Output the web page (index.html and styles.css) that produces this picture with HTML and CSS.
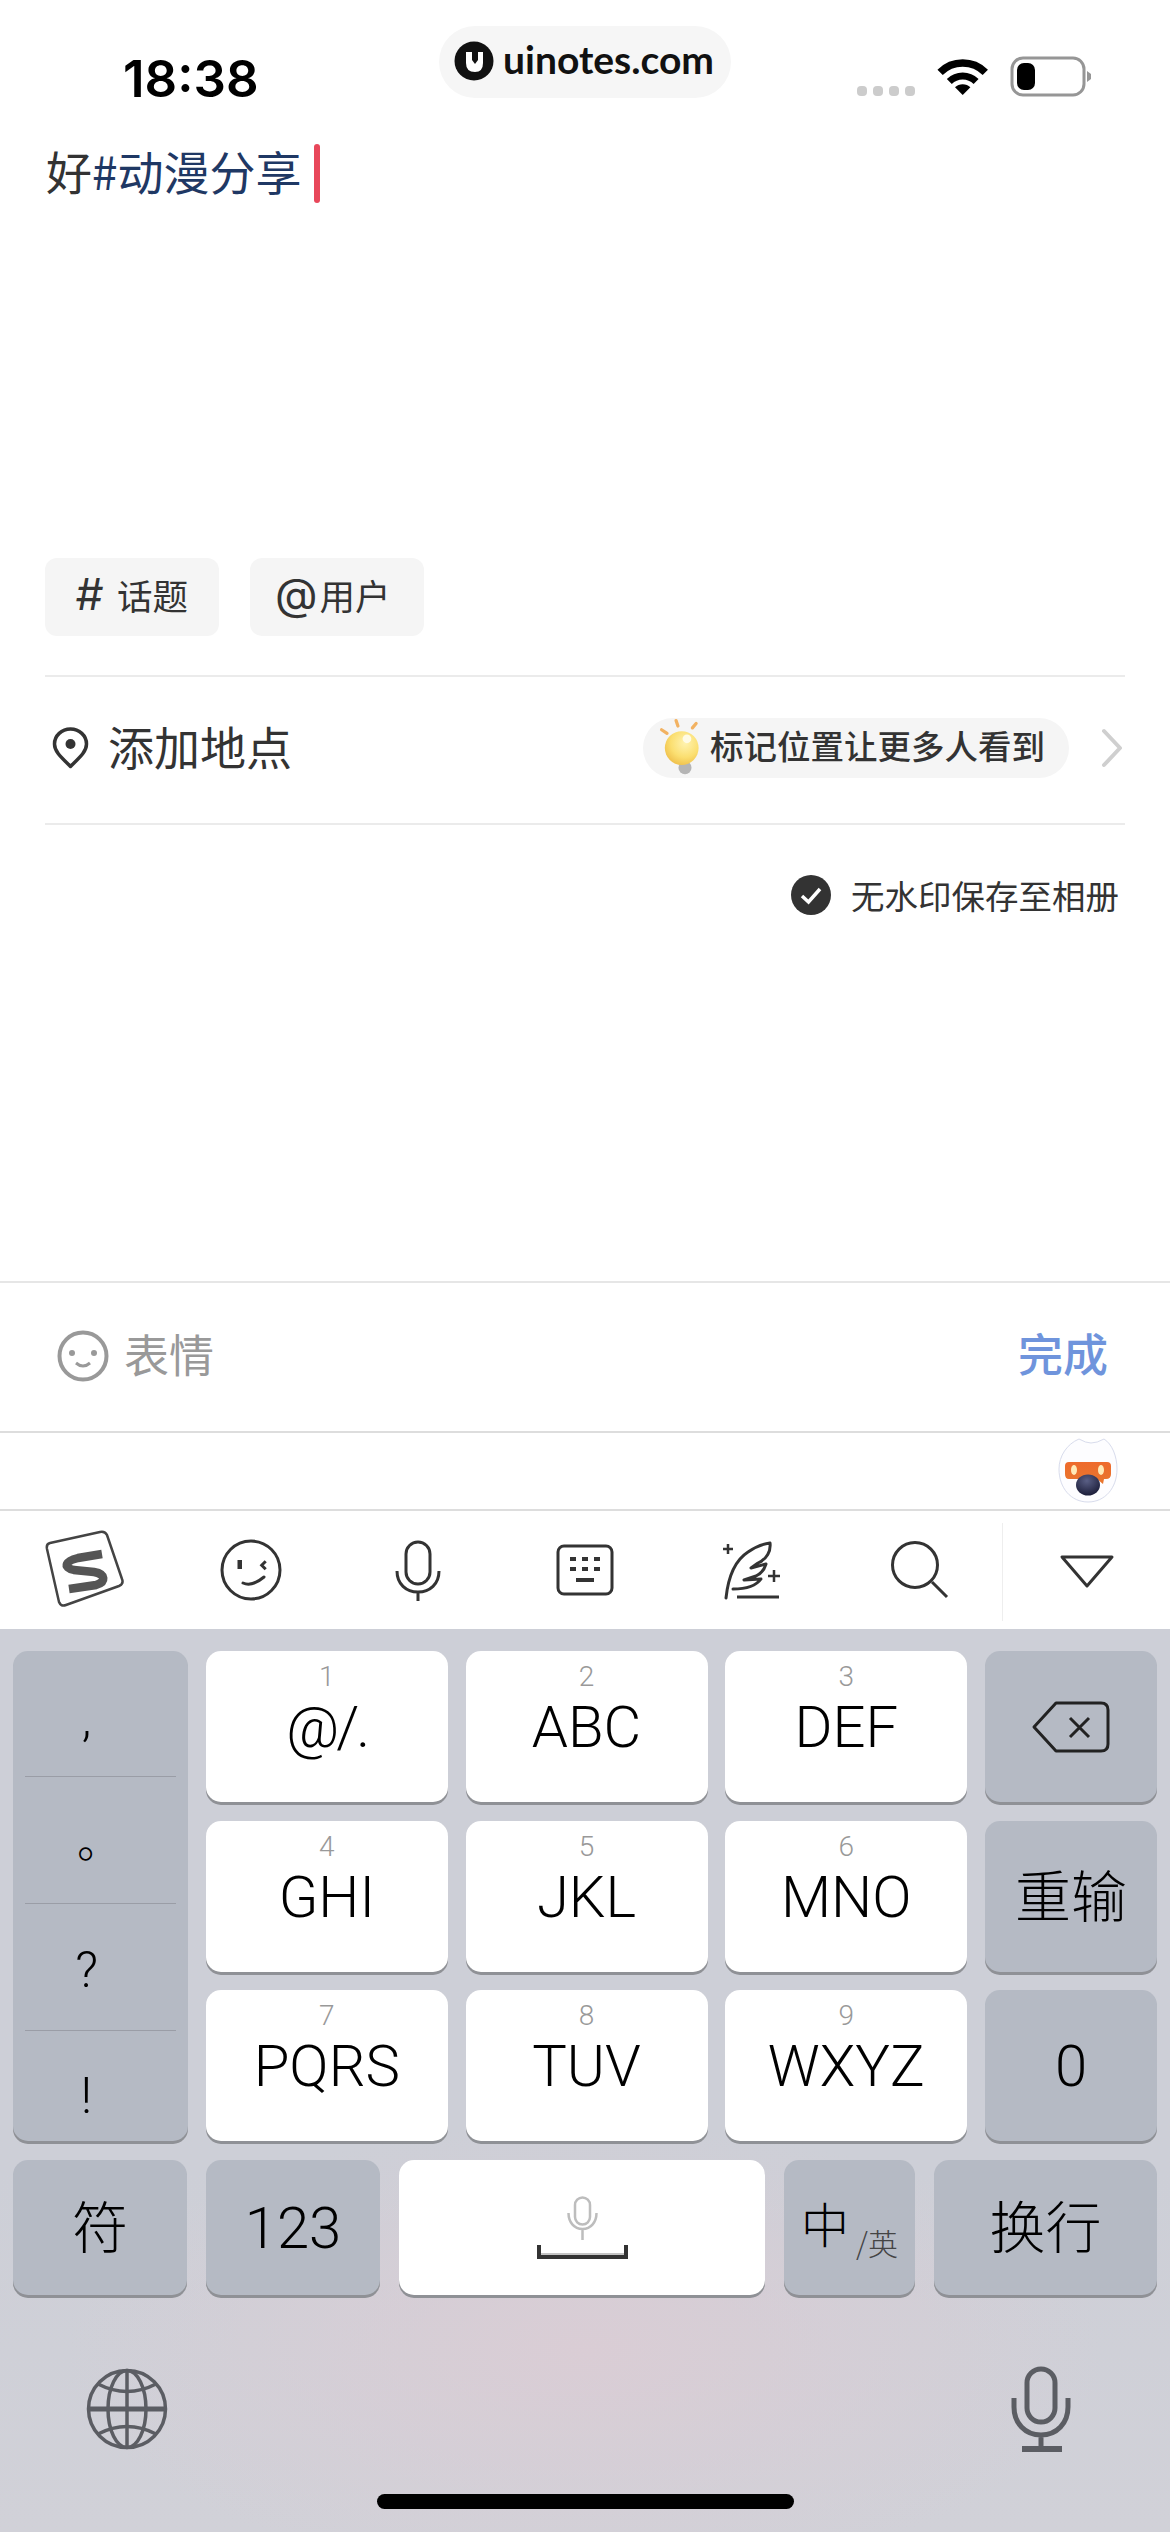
FILE: index.html
```html
<!DOCTYPE html>
<html lang="zh-CN">
<head>
    <meta charset="UTF-8">
    <meta name="viewport" content="width=device-width, initial-scale=1.0">
    <title>发布笔记</title>
    <link rel="stylesheet" href="styles.css">
</head>
<body>
<div class="page">
    <!-- Status bar -->
    <div class="status-bar">
        <span class="time">18:38</span>
        <div class="brand-pill">
            <svg class="brand-logo" width="40" height="40" viewBox="0 0 40 40">
                <circle cx="20" cy="20" r="19.5" fill="#111"/>
                <path d="M12 11H18V19L21 23L24 19V11H29V22Q29 31 21 31Q12 31 12 22Z" fill="#fff"/>
            </svg>
            <span>uinotes.com</span>
        </div>
        <div class="signal"><i></i><i></i><i></i><i></i></div>
        <svg class="wifi" width="54" height="40" viewBox="0 0 54 40">
            <path d="M4.1 15.4A32 32 0 0 1 49.3 15.4" fill="none" stroke="#000" stroke-width="7.5"/>
            <path d="M13.3 24.6A19 19 0 0 1 40.1 24.6" fill="none" stroke="#000" stroke-width="7"/>
            <path d="M26.7 38L19 30.3A11 11 0 0 1 34.4 30.3Z" fill="#000"/>
        </svg>
        <svg class="battery" width="84" height="42" viewBox="0 0 84 42">
            <rect x="2" y="2" width="72" height="37" rx="11" fill="none" stroke="#969696" stroke-width="3"/>
            <rect x="7" y="7" width="18" height="27" rx="7" fill="#000"/>
            <path d="M77 15L81 18V23L77 26Z" fill="#969696"/>
        </svg>
    </div>

    <!-- Note text -->
    <div class="editor">
        <span class="plain">好</span><span class="topic">#动漫分享</span><span class="caret"></span>
    </div>

    <div class="chips">
        <div class="chip"><span class="chip-hash">#</span><span class="chip-text">话题</span></div>
        <div class="chip chip-user"><span class="chip-at">@</span><span class="chip-text">用户</span></div>
    </div>

    <!-- Location row -->
    <div class="location">
        <svg class="pin" width="39" height="42" viewBox="0 0 39 42">
            <path d="M19.5 39.5C11 31 3.5 25 3.5 17A16 15 0 0 1 35.5 17C35.5 25 28 31 19.5 39.5Z" fill="none" stroke="#333" stroke-width="3.5" stroke-linejoin="round"/>
            <circle cx="19.5" cy="17" r="5" fill="#333"/>
        </svg>
        <span class="location-label">添加地点</span>
        <div class="hint">
            <svg width="46" height="61" viewBox="0 0 42 56">
                <defs>
                    <radialGradient id="bulbFill" cx="60%" cy="35%" r="70%">
                        <stop offset="0" stop-color="#fff3b0"/>
                        <stop offset="0.6" stop-color="#fbdf71"/>
                        <stop offset="1" stop-color="#efbf4a"/>
                    </radialGradient>
                </defs>
                <path d="M18.3 3.3L20 8.3M36.7 6L33.3 10M5 11.7L10 15" stroke="#f2b262" stroke-width="3" stroke-linecap="round"/>
                <circle cx="26.5" cy="46.5" r="6" fill="#b5b5b5"/>
                <circle cx="23.5" cy="28.5" r="15.5" fill="url(#bulbFill)"/>
                <circle cx="28.3" cy="20" r="4" fill="#fffbe6"/>
            </svg>
            <span>标记位置让更多人看到</span>
        </div>
        <svg class="chevron" width="24" height="40" viewBox="0 0 24 40">
            <path d="M4 3L20 20L4 37" fill="none" stroke="#cfcfcf" stroke-width="4" stroke-linecap="round" stroke-linejoin="round"/>
        </svg>
    </div>

    <div class="save-row">
        <svg width="40" height="40" viewBox="0 0 40 40">
            <circle cx="20" cy="20" r="20" fill="#333"/>
            <path d="M11 21L17.5 27L29 14" fill="none" stroke="#fff" stroke-width="3.5"/>
        </svg>
        <span>无水印保存至相册</span>
    </div>

    <!-- Emoji / done bar -->
    <div class="emoji-bar">
        <div class="emoji-left">
            <svg width="52" height="52" viewBox="0 0 52 52">
                <circle cx="26" cy="26" r="23.5" fill="none" stroke="#999" stroke-width="4"/>
                <circle cx="15" cy="23" r="3" fill="#999"/>
                <circle cx="37" cy="23" r="3" fill="#999"/>
                <path d="M19 33Q26 39 33 33" fill="none" stroke="#999" stroke-width="3"/>
            </svg>
            <span>表情</span>
        </div>
        <span class="done">完成</span>
    </div>

    <!-- Input method candidates strip -->
    <div class="assistant-bar">
        <svg width="62" height="70" viewBox="0 0 62 70">
            <defs>
                <linearGradient id="visor" x1="0" y1="0" x2="0" y2="1">
                    <stop offset="0" stop-color="#ee6a2c"/>
                    <stop offset="1" stop-color="#e8772e"/>
                </linearGradient>
                <radialGradient id="ball" cx="45%" cy="30%" r="70%">
                    <stop offset="0" stop-color="#5a5f85"/>
                    <stop offset="1" stop-color="#1c1e3a"/>
                </radialGradient>
            </defs>
            <path d="M22 3Q29 7 34 7Q40 7 47 3C55 8 60 20 60 33C60 52 48 66 31 66C14 66 2 52 2 33C2 20 10 8 22 3Z" fill="#fdfdff" stroke="#d8dcec" stroke-width="1"/>
            <path d="M12 26H50Q54 26 54 30V38Q54 43 49 43H47L46 48L40 43H12Q8 43 8 38V30Q8 26 12 26Z" fill="url(#visor)"/>
            <ellipse cx="17" cy="34" rx="3" ry="5" fill="#ffeab8"/>
            <ellipse cx="44" cy="34" rx="3" ry="5" fill="#ffeab8"/>
            <ellipse cx="31" cy="49" rx="12" ry="10.5" fill="url(#ball)"/>
        </svg>
    </div>

    <!-- Keyboard toolbar -->
    <div class="toolbar">
        <div class="tool">
            <svg width="80" height="80" viewBox="0 0 80 80">
                <path d="M6 13L56 2Q61 1 63 5L78 49Q80 54 75 56L22 75Q17 77 15 72L3 19Q2 14 6 13Z" fill="none" stroke="#444" stroke-width="2.5"/>
                <path d="M58 24L34 28C22 31 18 37 30 40L50 42C62 44 62 52 52 55L25 59" fill="none" stroke="#555" stroke-width="8.5"/>
            </svg>
        </div>
        <div class="tool">
            <svg width="62" height="62" viewBox="0 0 62 62">
                <circle cx="31" cy="31" r="29" fill="none" stroke="#333" stroke-width="3"/>
                <rect x="17.5" y="21" width="4.5" height="9" fill="#333"/>
                <path d="M45.7 22.3L41.7 26.3L45.7 30.3" fill="none" stroke="#333" stroke-width="3"/>
                <path d="M23 44Q32 48 44 38" fill="none" stroke="#333" stroke-width="3" stroke-linecap="round"/>
            </svg>
        </div>
        <div class="tool">
            <svg width="48" height="63" viewBox="0 0 48 63">
                <rect x="12" y="3" width="24" height="42" rx="12" fill="none" stroke="#333" stroke-width="3"/>
                <path d="M3 32C3 45 12 53 24 53C36 53 45 45 45 32M24 53V62" fill="none" stroke="#333" stroke-width="3"/>
            </svg>
        </div>
        <div class="tool">
            <svg width="59" height="54" viewBox="0 0 59 54">
                <rect x="3" y="3" width="54" height="48" rx="6" fill="none" stroke="#333" stroke-width="3"/>
                <path d="M15 14h6v4h-6zM27 14h6v4h-6zM39 14h6v4h-6zM15 24h6v4h-6zM27 24h6v4h-6zM39 24h6v4h-6zM21 35h18v4H21z" fill="#333"/>
            </svg>
        </div>
        <div class="tool">
            <svg width="64" height="62" viewBox="0 0 64 62">
                <path d="M6 59C8 40 14 22 28 13C35 8 42 5 50 4C51 12 47 20 38 24L31 29L46 25C44 32 40 35 36 37L24 41L41 40C36 47 28 50 13 50" fill="none" stroke="#333" stroke-width="3" stroke-linecap="round" stroke-linejoin="round"/>
                <path d="M8 5V15M3 10H13M54 31V43M48 37H60" stroke="#333" stroke-width="2.5"/>
                <path d="M17 58H59" stroke="#333" stroke-width="3"/>
            </svg>
        </div>
        <div class="tool">
            <svg width="60" height="58" viewBox="0 0 60 58">
                <circle cx="26" cy="24" r="22.5" fill="none" stroke="#333" stroke-width="3"/>
                <path d="M43 41L58 56" stroke="#333" stroke-width="3"/>
            </svg>
        </div>
        <div class="tool tool-last">
            <svg width="56" height="36" viewBox="0 0 56 36">
                <path d="M3 3H53L28 32Z" fill="none" stroke="#333" stroke-width="3" stroke-linejoin="round"/>
            </svg>
        </div>
    </div>

    <!-- Keyboard -->
    <div class="keyboard">
        <div class="keypad">
            <div class="key key-gray punct">
                <div class="punct-cell"><span class="p-comma">,</span></div>
                <div class="punct-cell"><span class="p-stop">。</span></div>
                <div class="punct-cell"><span class="p-ask">?</span></div>
                <div class="punct-cell"><span class="p-bang">!</span></div>
            </div>
            <div class="key key-num"><small>1</small><b class="tight">@/.</b></div>
            <div class="key key-num"><small>2</small><b>ABC</b></div>
            <div class="key key-num"><small>3</small><b>DEF</b></div>
            <div class="key key-gray">
                <svg width="80" height="54" viewBox="0 0 80 54">
                    <path d="M25 3H70Q77 3 77 10V44Q77 51 70 51H25L3 27Z" fill="none" stroke="#222" stroke-width="3" stroke-linejoin="round"/>
                    <path d="M39 18L58 37M58 18L39 37" stroke="#222" stroke-width="3"/>
                </svg>
            </div>
            <div class="key key-num"><small>4</small><b>GHI</b></div>
            <div class="key key-num"><small>5</small><b>JKL</b></div>
            <div class="key key-num"><small>6</small><b>MNO</b></div>
            <div class="key key-gray key-text"><span>重输</span></div>
            <div class="key key-num"><small>7</small><b>PQRS</b></div>
            <div class="key key-num"><small>8</small><b>TUV</b></div>
            <div class="key key-num"><small>9</small><b>WXYZ</b></div>
            <div class="key key-gray key-latin">0</div>
        </div>
        <div class="key-row">
            <div class="key key-gray key-text w-sym"><span>符</span></div>
            <div class="key key-gray key-latin w-sym">123</div>
            <div class="key key-space">
                <svg width="31" height="44" viewBox="0 0 31 44">
                    <rect x="8" y="1.5" width="15" height="27" rx="7.5" fill="none" stroke="#bdbdbd" stroke-width="2.5"/>
                    <path d="M1.5 17C1.5 26 7 33 15.5 33C24 33 29.5 26 29.5 17M15.5 33V44" fill="none" stroke="#bdbdbd" stroke-width="2.5"/>
                </svg>
                <svg width="91" height="14" viewBox="0 0 91 14">
                    <path d="M2 0V12H89V0" fill="none" stroke="#333" stroke-width="4"/>
                    <path d="M4 9H87" stroke="#c4c4c4" stroke-width="2"/>
                </svg>
            </div>
            <div class="key key-gray w-lang">
                <span class="lang-main">中</span><span class="lang-sub">/英</span>
            </div>
            <div class="key key-gray key-text w-return"><span>换行</span></div>
        </div>
        <div class="system-row">
            <svg width="84" height="84" viewBox="0 0 84 84">
                <g fill="none" stroke="#5b5d63" stroke-width="3.5">
                    <circle cx="42" cy="42" r="38.5"/>
                    <ellipse cx="42" cy="42" rx="19" ry="38.5"/>
                    <path d="M42 3.5V80.5"/>
                    <path d="M3.5 42H80.5" stroke-width="5"/>
                    <path d="M13 17Q42 32 71 17M13 67Q42 52 71 67"/>
                </g>
            </svg>
            <svg width="60" height="88" viewBox="0 0 60 88">
                <g fill="none" stroke="#5b5d63" stroke-width="5">
                    <rect x="16" y="4" width="28" height="53" rx="14"/>
                    <path d="M3 33V42C3 58 14 70 30 70C46 70 57 58 57 42V33M30 70V84"/>
                    <path d="M11 84H51" stroke-width="6"/>
                </g>
            </svg>
        </div>
        <div class="home-bar"></div>
    </div>
</div>
</body>
</html>
```
FILE: styles.css
```css
/* Reset and page frame */
* {
    box-sizing: border-box;
}

body {
    margin: 0;
    background-color: #fff;
    font-family: "Noto Sans CJK SC", "Noto Sans", sans-serif;
    color: #333;
}

.page {
    width: 1170px;
    height: 2532px;
    display: flex;
    flex-direction: column;
    overflow: hidden;
}

/* Status bar */
.status-bar {
    height: 130px;
    display: flex;
    align-items: flex-start;
    padding-left: 123px;
}

.time {
    width: 316px;
    margin-top: 50px;
    font-family: Inter, sans-serif;
    font-size: 51px;
    font-weight: 600;
    line-height: 58px;
    color: #000;
}

.brand-pill {
    width: 292px;
    height: 72px;
    margin-top: 26px;
    padding-left: 15px;
    display: flex;
    align-items: center;
    gap: 9px;
    border-radius: 36px;
    background-color: #f6f6f6;
    font-family: Lato, sans-serif;
    font-size: 39px;
    font-weight: 700;
    color: #111;
}

.brand-logo {
    margin-top: -2px;
}

.brand-pill span {
    margin-top: -6px;
}

.signal {
    display: flex;
    gap: 6px;
    margin: 86px 0 0 126px;
}

.signal i {
    width: 10px;
    height: 10px;
    border-radius: 4px;
    background-color: #ccc;
}

.wifi {
    margin: 57px 0 0 21px;
}

.battery {
    margin: 56px 0 0 20px;
}

/* Editor */
.editor {
    height: 428px;
    padding: 14px 0 0 46px;
    display: flex;
    align-items: flex-start;
    font-size: 46px;
    line-height: 52px;
}

.plain {
    color: #333;
}

.topic {
    color: #1f3864;
}

.caret {
    width: 6px;
    height: 59px;
    margin-left: 12px;
    border-radius: 3px;
    background-color: #e8475a;
}

.chips {
    display: flex;
    gap: 31px;
    padding-left: 45px;
}

.chip {
    width: 174px;
    height: 78px;
    padding-left: 30px;
    display: flex;
    align-items: center;
    gap: 14px;
    border-radius: 12px;
    background-color: #f5f5f5;
    font-size: 35.5px;
}

.chip-user {
    padding-left: 25px;
    gap: 2px;
}

.chip-text {
    margin-bottom: 6px;
}

.chip-hash {
    font-family: Inter, sans-serif;
    font-size: 44px;
    font-style: italic;
    margin-bottom: 6px;
}

.chip-at {
    font-family: Inter, sans-serif;
    font-size: 44px;
    margin-bottom: 6px;
}

/* Location row */
.location {
    height: 150px;
    margin: 39px 45px 0;
    padding-bottom: 5px;
    display: flex;
    align-items: center;
    border-top: 2px solid #ebebeb;
    border-bottom: 2px solid #ebebeb;
}

.pin {
    margin-left: 6px;
}

.location-label {
    margin: 0 0 6px 18px;
    font-size: 46px;
}

.hint {
    width: 426px;
    height: 60px;
    margin-left: auto;
    padding-left: 13px;
    display: flex;
    align-items: center;
    gap: 8px;
    border-radius: 30px;
    background-color: #f5f5f5;
    font-size: 33.5px;
    font-weight: 500;
    white-space: nowrap;
}

.hint span {
    margin-bottom: 6px;
}

.chevron {
    margin: 0 1px 0 31px;
}

.save-row {
    margin: 45px 51px 0 0;
    display: flex;
    justify-content: flex-end;
    align-items: center;
    gap: 20px;
    font-size: 33.5px;
}

/* Emoji bar */
.emoji-bar {
    height: 150px;
    margin-top: auto;
    padding: 0 62px 3px 57px;
    display: flex;
    justify-content: space-between;
    align-items: center;
    border-top: 2px solid #e6e6e6;
    font-size: 45px;
}

.emoji-left {
    display: flex;
    align-items: center;
    gap: 15px;
    color: #999;
}

.emoji-left span {
    margin-bottom: 4px;
}

.done {
    margin-bottom: 6px;
    font-weight: 500;
    color: #6f94dc;
}

.assistant-bar {
    height: 78px;
    padding-right: 51px;
    display: flex;
    justify-content: flex-end;
    align-items: center;
    border-top: 2px solid #ddd;
}

/* Toolbar */
.toolbar {
    height: 120px;
    display: grid;
    grid-template-columns: repeat(6, 167px) 168px;
    align-items: center;
    border-top: 2px solid #ddd;
}

.tool {
    height: 100%;
    display: flex;
    justify-content: center;
    align-items: center;
}

.tool-last {
    border-left: 1px solid #eee;
    margin: 12px 0 8px;
    height: auto;
    align-self: stretch;
}

/* Keyboard */
.keyboard {
    flex: none;
    height: 903px;
    padding: 22px 13px 0;
    background:
        radial-gradient(ellipse 520px 230px at 50% 80%, #dacdd5, rgba(218, 205, 213, 0)),
        linear-gradient(#cdcfd7 60%, #d1d1d8);
}

.keypad {
    display: grid;
    grid-template-columns: 175px 242px 242px 242px 172px;
    grid-template-rows: 151px 151px 151px;
    gap: 18.5px 17.75px;
}

.key {
    display: flex;
    justify-content: center;
    align-items: center;
    border-radius: 15px;
    box-shadow: 0 3px 0 #8f9196;
    color: #000;
}

.key-gray {
    background-color: #b5bac4;
}

.key-num,
.key-space {
    background-color: #fff;
}

.key-num {
    flex-direction: column;
    justify-content: flex-start;
    padding-top: 12px;
}

.key-num small {
    font-family: Roboto, sans-serif;
    font-size: 28px;
    font-weight: 300;
    line-height: 28px;
    color: #999;
}

.key-num b {
    margin-top: 2px;
    font-family: Roboto, sans-serif;
    font-size: 58px;
    font-weight: 300;
    line-height: 68px;
}

.key-num .tight {
    letter-spacing: -3px;
}

.key-text {
    font-size: 56px;
    font-weight: 300;
}

.key-text span {
    margin-bottom: 8px;
}

.key-latin {
    font-family: Roboto, sans-serif;
    font-size: 58px;
    font-weight: 300;
}

.punct {
    grid-row: span 3;
    flex-direction: column;
    align-items: stretch;
    justify-content: flex-start;
    padding: 0 12px;
}

.punct-cell {
    height: 127px;
    padding-right: 28px;
    border-bottom: 1px solid #9a9da6;
    text-align: center;
    font-family: Roboto, sans-serif;
    font-size: 50px;
    font-weight: 300;
    line-height: 127px;
}

.punct-cell:first-child {
    height: 126px;
}

.punct-cell:last-child {
    height: 110px;
    border-bottom: none;
}

.p-comma {
    display: block;
    margin-top: 13px;
    line-height: 110px;
}

.p-stop {
    display: block;
    margin-left: 25px;
    font-family: "Noto Sans CJK SC", sans-serif;
    font-size: 44px;
    line-height: 125px;
}

.p-ask {
    display: block;
    margin-top: 6px;
    line-height: 120px;
}

.p-bang {
    display: block;
    margin-top: 7px;
    line-height: 116px;
}

.key-row {
    display: flex;
    gap: 19px;
    margin-top: 19px;
    height: 135px;
}

.w-sym {
    width: 174px;
}

.key-space {
    width: 366px;
    flex-direction: column;
    gap: 5px;
}

.w-lang {
    width: 131px;
    align-items: flex-start;
    padding-top: 32px;
    font-weight: 300;
}

.lang-main {
    font-size: 48px;
    line-height: 60px;
}

.lang-sub {
    margin-top: 30px;
    margin-left: 7px;
    font-size: 30px;
    line-height: 40px;
    color: #444;
}

.w-return {
    width: 223px;
}

.system-row {
    margin-top: 70px;
    padding: 0 86px 0 72px;
    display: flex;
    justify-content: space-between;
    align-items: center;
}

.home-bar {
    width: 417px;
    height: 15px;
    margin: 41px auto 0;
    border-radius: 8px;
    background-color: #000;
}
```
